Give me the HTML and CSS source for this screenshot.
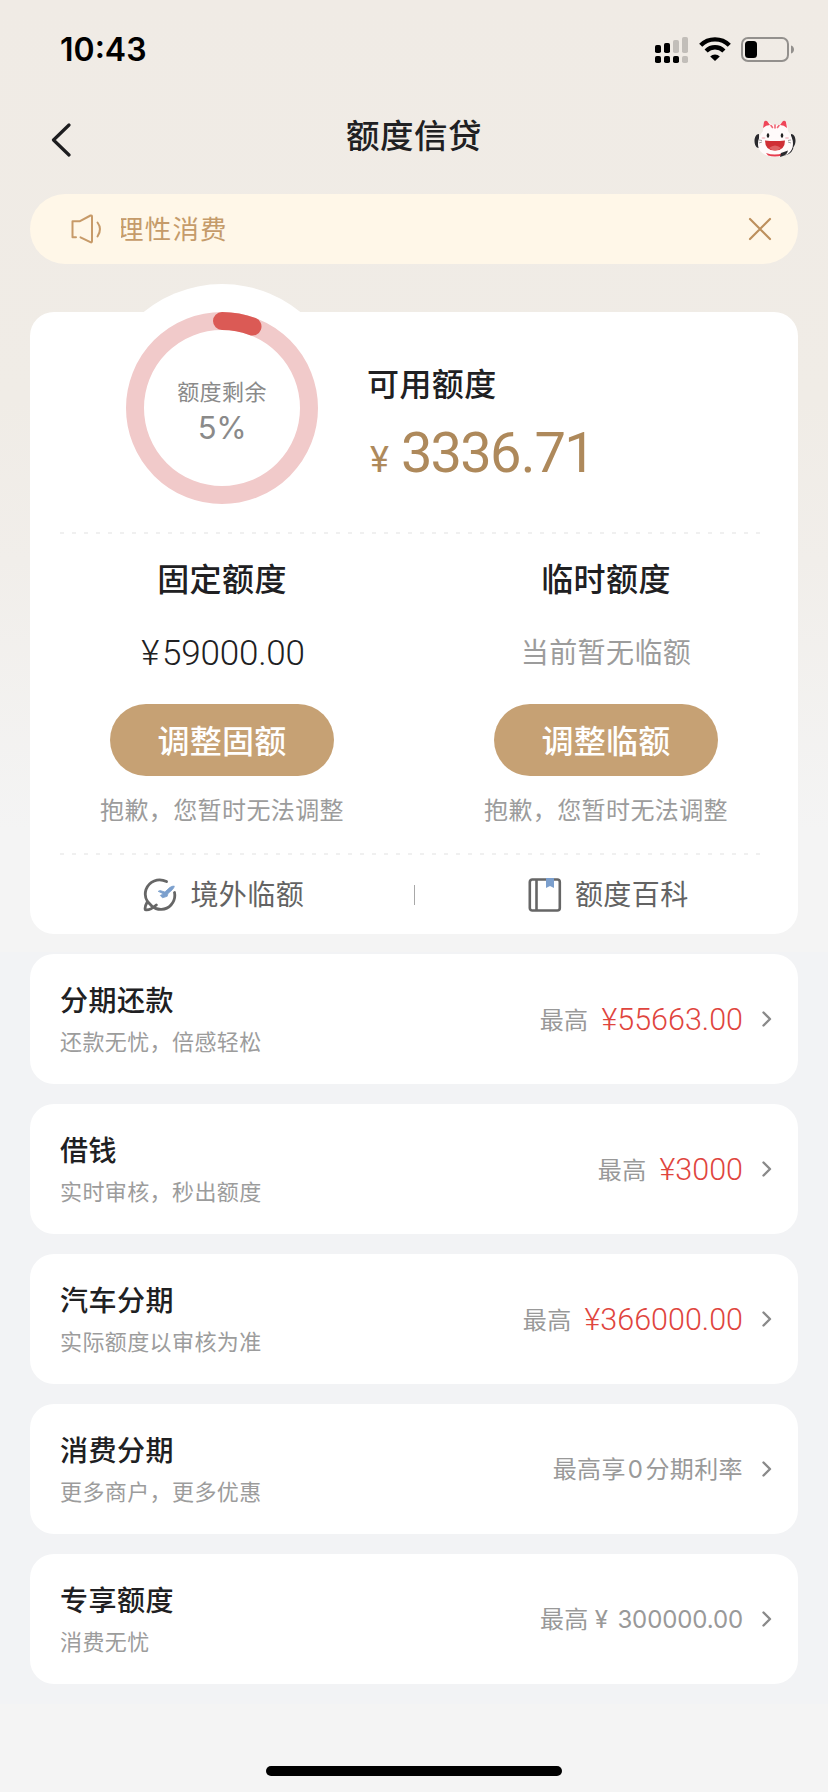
FILE: index.html
```html
<!DOCTYPE html>
<html lang="zh-CN">
<head>
<meta charset="utf-8">
<title>额度信贷</title>
<link rel="stylesheet" href="styles.css">
</head>
<body>
<div class="screen">
  <div class="status-bar">
    <span class="time">10:43</span>
    <div class="status-icons">
      <svg class="signal" width="33" height="26" viewBox="0 0 33 26">
        <g fill="#000"><rect x="0" y="8" width="6" height="8" rx="1.8"/><rect x="9" y="6" width="6" height="10" rx="1.8"/><rect x="0" y="19" width="6" height="7" rx="1.8"/><rect x="9" y="19" width="6" height="7" rx="1.8"/><rect x="18" y="19" width="6" height="7" rx="1.8"/></g>
        <g fill="#c2beb9"><rect x="18" y="3" width="6" height="13" rx="1.8"/><rect x="27" y="0" width="6" height="16" rx="1.8"/><rect x="27" y="19" width="6" height="7" rx="1.8"/></g>
      </svg>
      <svg class="wifi" width="32" height="24" viewBox="0 0 32 24">
        <g fill="none" stroke="#000" stroke-width="4.4"><path d="M1.7 8.2a20.4 20.4 0 0 1 28.6 0"/><path d="M7.1 14a12.6 12.6 0 0 1 17.8 0"/></g>
        <path d="M16 24l-4.8-4.6a6.9 6.9 0 0 1 9.6 0z"/>
      </svg>
      <svg class="battery" width="53" height="25" viewBox="0 0 53 25">
        <rect x="1" y="1" width="46" height="23" rx="6" fill="none" stroke="#93908d" stroke-width="2"/>
        <rect x="4" y="4" width="12" height="17" rx="3.5"/>
        <path d="M50 8.500c4 1 4 7 0 8z" fill="#93908d"/>
      </svg>
    </div>
  </div>

  <header class="nav">
    <svg class="back" width="20" height="34" viewBox="0 0 20 34"><path d="M18 2L2.500 17L18 32" fill="none" stroke="#1d1d1f" stroke-width="3.200" stroke-linecap="round" stroke-linejoin="round"/></svg>
    <h1 class="nav-title">额度信贷</h1>
    <svg class="mascot" width="42" height="38" viewBox="0 0 42 38">
      <path d="M5 14c-6 0-6 14 0 14zM37 14c6 0 6 13 0 14z" fill="#29292d"/>
      <path d="M39 24c0 7-3 10-9 11" fill="none" stroke="#29292d" stroke-width="1.500"/>
      <path d="M9 11L10 3Q11 0 14 2L19 5h5l5-3q3-2 4 1l1 8q5 6 5 13c0 9-8 13-17 13S4 33 4 24q0-7 5-13z" fill="#fffafa"/>
      <path d="M9 8l1-6q1-2 3-1l3 4q-4 0-7 3zM33 8l-1-6q-1-2-3-1l-3 4q4 0 7 3z" fill="#ef4659"/>
      <path d="M17 5.500l1.500 2M21 5v3M25 5.500l-1.500 2" stroke="#ef6673" stroke-width="1.600" stroke-linecap="round"/>
      <path d="M12 33q9 3 17 0l-1 2.500q-7 2-14 0z" fill="#e63d4e"/>
      <path d="M26 37l1-4 7-2.500q-1 5-8 6.500z" fill="#29292d"/>
      <ellipse cx="14" cy="15.500" rx="1.300" ry="2.200" fill="#222"/><ellipse cx="28" cy="15.500" rx="1.300" ry="2.200" fill="#222"/>
      <path d="M11 20.500q10 1 20 0 0 10-10 10T11 20.500z" fill="#cf2f35"/>
      <path d="M15 28q6-5 12 0-6 5-12 0z" fill="#df6264"/>
      <path d="M5 20l3 .5M5 23l3-1M34 20.500l3-.5M34 22l3 1" stroke="#777" stroke-width=".7"/>
      <ellipse cx="9.500" cy="18" rx="2" ry="1" fill="#f6c5cc"/><ellipse cx="33" cy="18" rx="2" ry="1" fill="#f6c5cc"/>
    </svg>
  </header>

  <div class="notice">
    <svg width="33" height="30" viewBox="0 0 33 30" fill="none" stroke="#c79a68" stroke-width="2" stroke-linecap="round" stroke-linejoin="round"><path d="M5 23.200H1.500V7.200H9L19.500 1.500q1.500-.5 1.500 1.200V27q0 2-1.600 1.200L9.500 23.300"/><path d="M26.500 8.500q5 6.500 0 14"/></svg>
    <div class="notice-clip"><span class="notice-text">理性消费</span></div>
    <svg class="close" width="24" height="24" viewBox="0 0 24 24"><path d="M2 2l20 20M22 2L2 22" stroke="#bd905d" stroke-width="2.200" stroke-linecap="round"/></svg>
  </div>

  <section class="card">
    <div class="summary">
      <div class="gauge">
        <svg width="248" height="248" viewBox="0 0 248 248" fill="none">
          <circle cx="124" cy="124" r="124" fill="#fff"/>
          <circle cx="124" cy="124" r="87" stroke="#f1caca" stroke-width="18"/>
          <path d="M124 37A87 87 0 0 1 154.500 42.500" stroke="#db5a55" stroke-width="18" stroke-linecap="round"/>
        </svg>
        <div class="gauge-label"><span class="gauge-name">额度剩余</span><span class="gauge-value">5%</span></div>
      </div>
      <div class="available">
        <h2 class="heading">可用额度</h2>
        <p class="available-amount"><span class="yen">¥</span><span class="number">3336<span class="point">.</span>71</span></p>
      </div>
    </div>
    <div class="dash"></div>
    <div class="columns">
      <div class="column">
        <h2 class="heading">固定额度</h2>
        <p class="fixed-amount"><span class="fixed-yen">¥</span>59000.00</p>
        <button class="pill">调整固额</button>
        <p class="hint">抱歉，您暂时无法调整</p>
      </div>
      <div class="column">
        <h2 class="heading">临时额度</h2>
        <p class="no-amount">当前暂无临额</p>
        <button class="pill">调整临额</button>
        <p class="hint">抱歉，您暂时无法调整</p>
      </div>
    </div>
    <div class="dash"></div>
    <div class="links">
      <a class="link">
        <svg width="34" height="34" viewBox="0 0 34 34" fill="none" stroke="#666" stroke-width="2.800" stroke-linecap="round" stroke-linejoin="round">
          <path d="M23.500 3.600C15-.5 6 3.500 3 11.500c-1.500 5-.5 9 1.500 12-2 3.500-3 6-2.200 8.200 2.500.6 7-1.200 11-4.700"/>
          <path d="M5 24l4 4.200c5 4.500 14 4.500 19-1.200 3.500-4 4.300-8.500 3.500-12.500"/>
          <path d="M15.500 13.200l1.600-.7 4.800 1.500 4.800-4.500q3-1.700 4.600-1.400 0 1.700-2.200 3.800L25 15.500l-.8 2.800-4.700 1.500-2.200-2.400 2.900-1.400z" fill="#7b9fcd" stroke="#7b9fcd" stroke-width=".8"/>
        </svg>
        <span class="link-text">境外临额</span>
      </a>
      <i class="divider"></i>
      <a class="link">
        <svg width="34" height="34" viewBox="0 0 34 34" fill="none" stroke="#666" stroke-width="2.600"><rect x="1.800" y="1.500" width="30" height="31" rx="2.500"/><path d="M8.500 2v30"/><path d="M18 0h8v10l-4-2-4 2z" fill="#7b9fcd" stroke="none"/></svg>
        <span class="link-text">额度百科</span>
      </a>
    </div>
  </section>

  <section class="list">
    <article class="row">
      <div class="row-main"><h3 class="row-title">分期还款</h3><p class="row-sub">还款无忧，倍感轻松</p></div>
      <div class="row-side"><span class="upto">最高</span><span class="red">¥55663.00</span></div>
      <svg class="chevron" width="10" height="16" viewBox="0 0 10 16"><path d="M1.500 1.500L8 8l-6.500 6.500"/></svg>
    </article>
    <article class="row">
      <div class="row-main"><h3 class="row-title">借钱</h3><p class="row-sub">实时审核，秒出额度</p></div>
      <div class="row-side"><span class="upto">最高</span><span class="red">¥3000</span></div>
      <svg class="chevron" width="10" height="16" viewBox="0 0 10 16"><path d="M1.500 1.500L8 8l-6.500 6.500"/></svg>
    </article>
    <article class="row">
      <div class="row-main"><h3 class="row-title">汽车分期</h3><p class="row-sub">实际额度以审核为准</p></div>
      <div class="row-side"><span class="upto">最高</span><span class="red">¥366000.00</span></div>
      <svg class="chevron" width="10" height="16" viewBox="0 0 10 16"><path d="M1.500 1.500L8 8l-6.500 6.500"/></svg>
    </article>
    <article class="row">
      <div class="row-main"><h3 class="row-title">消费分期</h3><p class="row-sub">更多商户，更多优惠</p></div>
      <div class="row-side"><span class="upto">最高享<span class="zero">0</span>分期利率</span></div>
      <svg class="chevron" width="10" height="16" viewBox="0 0 10 16"><path d="M1.500 1.500L8 8l-6.500 6.500"/></svg>
    </article>
    <article class="row">
      <div class="row-main"><h3 class="row-title">专享额度</h3><p class="row-sub">消费无忧</p></div>
      <div class="row-side"><span class="upto">最高<span class="gray-yen">¥</span><span class="gray-number">300000.00</span></span></div>
      <svg class="chevron" width="10" height="16" viewBox="0 0 10 16"><path d="M1.500 1.500L8 8l-6.500 6.500"/></svg>
    </article>
  </section>

  <footer class="home"><div class="home-bar"></div></footer>
</div>
</body>
</html>
```
FILE: styles.css
```css
* { box-sizing: border-box; margin: 0; padding: 0; }
body { background: #f4f4f4; font-family: "Noto Sans CJK SC", sans-serif; color: #202022; }
svg { display: block; flex: none; }

.screen {
  width: 828px;
  height: 1792px;
  overflow: hidden;
  display: flex;
  flex-direction: column;
  background: linear-gradient(#f0ebe5 0, #f0ece6 400px, #f1eeea 560px, #f4f4f4 830px);
}

.status-bar { height: 88px; padding: 12px 34px 0 60px; display: flex; justify-content: space-between; }
.time { font: 600 32px/76px Inter, sans-serif; color: #000; }
.status-icons { display: flex; align-items: flex-start; padding-top: 25px; }
.wifi { margin-left: 11px; }
.battery { margin-left: 10px; }

.nav { height: 96px; padding: 0 32px 0 51px; display: grid; grid-template-columns: 1fr auto 1fr; align-items: center; }
.back { margin-top: 8px; }
.nav-title { font-size: 33.500px; line-height: 50px; font-weight: 500; letter-spacing: .5px; margin-left: -19px; margin-top: -4px; white-space: nowrap; }
.mascot { justify-self: end; margin-top: 6px; }

.notice { margin: 10px 30px 0; height: 70px; flex: none; border-radius: 35px; background: #fff7e8; padding: 0 26px 0 41px; display: flex; align-items: center; }
.notice-clip { flex: 1; margin-left: 17px; overflow: hidden; }
.notice-text { display: block; margin: -2px 0 0 -4px; font-size: 26.500px; line-height: 40px; letter-spacing: 1.200px; font-weight: 400; color: #c59b6a; }

.card { margin: 48px 30px 0; height: 622px; flex: none; border-radius: 24px; background: #fff; }
.summary { height: 220px; display: flex; }
.gauge { position: relative; margin: -28px 0 0 68px; width: 248px; height: 248px; }
.gauge-label { position: absolute; inset: 0; padding-top: 90px; display: flex; flex-direction: column; align-items: center; color: #8a8a8a; }
.gauge-name { font-size: 22px; line-height: 32px; letter-spacing: .4px; }
.gauge-value { font: 400 31px/40px Inter, sans-serif; margin-top: 2px; letter-spacing: -.3px; }
.available { padding: 46px 0 0 21px; }
.heading { font-size: 32px; line-height: 48px; letter-spacing: .4px; font-weight: 500; }
.available-amount { display: flex; align-items: baseline; color: #ae895b; font-family: Roboto, sans-serif; line-height: 60px; margin-top: 17px; }
.yen { font-size: 36px; letter-spacing: -1px; margin-left: 3px; padding-bottom: 2px; }
.number { font-size: 56px; letter-spacing: -1.800px; margin-left: 13px; }
.point { margin: 0 1px; }

.dash { height: 2px; margin: 0 36px 0 30px; background: repeating-linear-gradient(90deg, #f0f0f0 0 4px, transparent 4px 12px); }

.columns { display: grid; grid-template-columns: 1fr 1fr; height: 319px; }
.column { display: flex; flex-direction: column; align-items: center; padding-top: 19px; }
.fixed-amount { font: 300 35px/50px Roboto, sans-serif; letter-spacing: -.2px; margin: 28px 0 0 2px; color: #202022; }
.fixed-yen { margin-right: 3px; }
.no-amount { font-size: 28px; line-height: 50px; letter-spacing: .4px; color: #9c9c9c; margin-top: 25px; height: 53px; }
.pill { width: 224px; height: 72px; margin-top: 25px; border: 0; border-radius: 36px; background: #c6a174; color: #fff; font: 500 32px/48px "Noto Sans CJK SC", sans-serif; padding-bottom: 3px; letter-spacing: .2px; flex: none; }
.hint { font-size: 24px; line-height: 36px; letter-spacing: .4px; color: #9c9c9c; margin-top: 15px; }

.links { height: 79px; display: flex; align-items: center; }
.link { flex: 1; display: flex; align-items: center; justify-content: center; gap: 13px; padding-left: 4px; font-size: 28px; line-height: 40px; letter-spacing: .4px; color: #636363; }
.link-text { margin-top: -4px; }
.divider { width: 1px; height: 20px; background: #a8a8a8; }

.list { margin-top: 18px; padding: 2px 30px 20px; background: #f2f3f5; display: flex; flex-direction: column; gap: 20px; }
.row { height: 130px; border-radius: 24px; background: #fff; padding: 0 26px 0 30px; display: flex; align-items: center; }
.row-main { flex: 1; padding-bottom: 3px; }
.row-title { font-size: 28px; line-height: 40px; letter-spacing: .5px; font-weight: 500; }
.row-sub { margin-top: 5px; font-size: 22px; line-height: 32px; letter-spacing: .4px; color: #9c9c9c; }
.row-side { display: flex; align-items: center; line-height: 40px; }
.upto { font-size: 24px; letter-spacing: .4px; color: #999; }
.red { font: 300 30.500px/40px Roboto, sans-serif; letter-spacing: 0; color: #df453e; margin: 1px 0 0 13px; }
.zero { font-family: Inter, sans-serif; margin: 0 2px; }
.gray-yen { font-family: Inter, sans-serif; margin: 0 9px 0 6px; }
.gray-number { font-family: Inter, sans-serif; letter-spacing: -.1px; }
.chevron { margin-left: 19px; fill: none; stroke: #8a8a8a; stroke-width: 2.400; stroke-linecap: round; stroke-linejoin: round; }

.home { padding-top: 62px; display: flex; justify-content: center; }
.home-bar { width: 296px; height: 10px; border-radius: 5px; background: #000; }
```
